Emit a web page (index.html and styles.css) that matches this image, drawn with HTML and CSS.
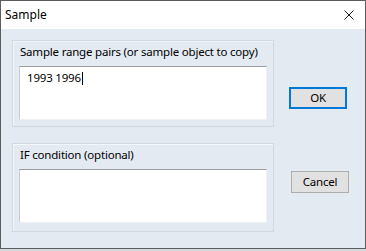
FILE: index.html
```html
<!DOCTYPE html>
<html>
<head>
<meta charset="utf-8">
<link rel="stylesheet" href="styles.css">
</head>
<body>
<div class="window">
  <div class="titlebar">
    <span class="title">Sample</span>
    <svg class="close" width="10" height="10" viewBox="0 0 10 10"><path d="M0.5 0.5 L9.5 9.5 M9.5 0.5 L0.5 9.5" stroke="#1a1a1a" stroke-width="1" fill="none"/></svg>
  </div>
  <div class="client">
    <div class="row">
      <div class="group">
        <div class="group-label">Sample range pairs (or sample object to copy)</div>
        <div class="edit"><span>1993 1996</span><span class="caret"></span></div>
      </div>
      <button class="btn btn-ok">OK</button>
    </div>
    <div class="row row-second">
      <div class="group group-second">
        <div class="group-label">IF condition (optional)</div>
        <div class="edit"></div>
      </div>
      <button class="btn btn-cancel">Cancel</button>
    </div>
  </div>
</div>
</body>
</html>
```
FILE: styles.css
```css
* { box-sizing: border-box; }
html, body { margin: 0; padding: 0; }
body {
  width: 366px;
  height: 251px;
  background: #d4d8dd;
  font-family: "Noto Sans", "Open Sans", sans-serif;
  color: #000;
}
.window {
  width: 366px;
  height: 249px;
  border: 1px solid #5c5c5c;
  background: #e4eaf2;
  display: flex;
  flex-direction: column;
}
.titlebar {
  height: 28px;
  flex: none;
  background: #fff;
  display: flex;
  align-items: center;
  justify-content: space-between;
  padding: 0 11px 0 4px;
}
.title {
  font-size: 12px;
  line-height: 16px;
}
.close { display: block; }
.client {
  flex: 1;
  padding: 11px 0 0 11px;
  display: flex;
  flex-direction: column;
}
.row {
  display: flex;
  align-items: flex-start;
}
.row-second { margin-top: 16px; }
.group {
  width: 262px;
  border: 1px solid #d2d8e0;
  box-shadow: inset 1px 1px 0 #f3f6fa;
  padding: 3px 6px 6px 6px;
}
.group-second { padding-bottom: 8px; }
.group-label {
  font-size: 11.5px;
  letter-spacing: -0.2px;
  line-height: 16px;
  padding-left: 1px;
  margin-bottom: 6px;
  white-space: nowrap;
}
.edit {
  height: 54px;
  background: #fff;
  border-top: 1px solid #9c9c9c;
  border-left: 1px solid #c9ccd1;
  border-right: 1px solid #eef0f3;
  border-bottom: 1px solid #eef0f3;
  padding: 3px 7px;
  font-size: 11.5px;
  letter-spacing: -0.2px;
  line-height: 16px;
}
.caret {
  display: inline-block;
  width: 1px;
  height: 13px;
  background: #000;
  vertical-align: -3px;
  margin-left: 1px;
}
.btn {
  width: 58px;
  height: 22px;
  background: #e1e1e1;
  font-family: "Noto Sans", "Open Sans", sans-serif;
  font-size: 11.5px;
  letter-spacing: -0.2px;
  color: #000;
  padding: 0;
  margin: 0;
  line-height: 16px;
}
.btn-ok {
  border: 2px solid #0078d7;
  margin-left: 15px;
  margin-top: 47px;
}
.btn-cancel {
  border: 1px solid #adadad;
  margin-left: 17px;
  margin-top: 28px;
}
```
